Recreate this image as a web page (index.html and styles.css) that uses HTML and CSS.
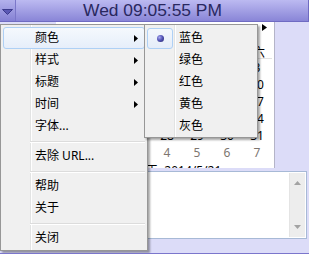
FILE: index.html
```html
<!DOCTYPE html>
<html>
<head>
<meta charset="utf-8">
<link rel="stylesheet" href="styles.css">
</head>
<body>
<div class="window">
  <div class="titlebar">
    <div class="drop">
      <svg width="11" height="6" viewBox="0 0 11 6"><path d="M0.5 0.5 L10.5 0.5 L5.5 5.5 Z" fill="#5b58b4" stroke="#3c3a8c" stroke-width="1"/></svg>
    </div>
    <div class="clock">Wed 09:05:55 PM</div>
  </div>
  <div class="content">
    <div class="calendar">
      <div class="cal-head">
        <span class="nav">
          <svg width="5" height="7" viewBox="0 0 5 7"><path d="M5 0 L0 3.5 L5 7 Z" fill="#000"/></svg>
        </span>
        <span class="month">2014年5月</span>
        <span class="nav">
          <svg width="5" height="7" viewBox="0 0 5 7"><path d="M0 0 L5 3.5 L0 7 Z" fill="#000"/></svg>
        </span>
      </div>
      <div class="weekdays">
        <span>日</span><span>一</span><span>二</span><span>三</span><span>四</span><span>五</span><span>六</span>
      </div>
      <div class="days">
        <span class="other">27</span><span class="other">28</span><span class="other">29</span><span class="other">30</span><span>1</span><span>2</span><span>3</span>
        <span>4</span><span>5</span><span>6</span><span>7</span><span>8</span><span>9</span><span>10</span>
        <span>11</span><span>12</span><span>13</span><span>14</span><span>15</span><span>16</span><span>17</span>
        <span>18</span><span>19</span><span>20</span><span class="today">21</span><span>22</span><span>23</span><span>24</span>
        <span>25</span><span>26</span><span>27</span><span>28</span><span>29</span><span>30</span><span>31</span>
        <span class="other">1</span><span class="other">2</span><span class="other">3</span><span class="other">4</span><span class="other">5</span><span class="other">6</span><span class="other">7</span>
      </div>
      <div class="today-line">今天: 2014/5/21</div>
    </div>
    <div class="notes">
      <div class="notes-text"></div>
      <div class="scrollbar">
        <svg width="7" height="4" viewBox="0 0 7 4"><path d="M0 4 L3.5 0 L7 4 Z" fill="#a3a3a3"/></svg>
        <svg width="7" height="4" viewBox="0 0 7 4"><path d="M0 0 L3.5 4 L7 0 Z" fill="#a3a3a3"/></svg>
      </div>
    </div>
  </div>

  <div class="menu main-menu">
    <div class="item hot">颜色<svg class="arrow" width="4" height="7" viewBox="0 0 4 7"><path d="M0 0 L4 3.5 L0 7 Z" fill="#000"/></svg></div>
    <div class="item">样式<svg class="arrow" width="4" height="7" viewBox="0 0 4 7"><path d="M0 0 L4 3.5 L0 7 Z" fill="#000"/></svg></div>
    <div class="item">标题<svg class="arrow" width="4" height="7" viewBox="0 0 4 7"><path d="M0 0 L4 3.5 L0 7 Z" fill="#000"/></svg></div>
    <div class="item">时间<svg class="arrow" width="4" height="7" viewBox="0 0 4 7"><path d="M0 0 L4 3.5 L0 7 Z" fill="#000"/></svg></div>
    <div class="item">字体...</div>
    <div class="sep"></div>
    <div class="item">去除 URL...</div>
    <div class="sep"></div>
    <div class="item">帮助</div>
    <div class="item">关于</div>
    <div class="sep"></div>
    <div class="item">关闭</div>
  </div>

  <div class="menu sub-menu">
    <div class="sitem"><span class="check on"><span class="dot"></span></span>蓝色</div>
    <div class="sitem"><span class="check"></span>绿色</div>
    <div class="sitem"><span class="check"></span>红色</div>
    <div class="sitem"><span class="check"></span>黄色</div>
    <div class="sitem"><span class="check"></span>灰色</div>
  </div>
</div>
</body>
</html>
```
FILE: styles.css
```css
html, body {
  margin: 0;
  padding: 0;
}

body {
  font-family: "Noto Sans", "Noto Sans CJK SC", sans-serif;
  font-size: 12px;
  color: #000;
}

.window {
  position: relative;
  width: 309px;
  height: 254px;
  box-sizing: border-box;
  background: #dcdcf8;
  border-bottom: 1px solid #7b76cc;
  overflow: hidden;
  display: flex;
  flex-direction: column;
}

.titlebar {
  height: 22px;
  flex: none;
  display: flex;
  box-sizing: border-box;
  background: linear-gradient(#bcbaf1, #8985d7);
  border-bottom: 1px solid #6f6bc2;
  border-right: 1px solid #6f6bc2;
}

.drop {
  width: 16px;
  flex: none;
  display: flex;
  align-items: center;
  justify-content: center;
  padding-top: 2px;
  box-sizing: border-box;
  border-right: 1px solid #7b77c9;
  background: linear-gradient(#b3b1ec, #8581d4);
}

.clock {
  flex: 1;
  text-align: center;
  padding-right: 19px;
  font-family: "Liberation Sans", Arial, sans-serif;
  font-size: 17.4px;
  line-height: 21px;
  color: #29285f;
}

.content {
  flex: 1;
  display: flex;
  flex-direction: column;
}

.calendar {
  margin-left: 56px;
  width: 219px;
  height: 146px;
  box-sizing: border-box;
  background: #fff;
  border-right: 1px solid #b4b4c8;
  overflow: hidden;
  flex: none;
}

.cal-head {
  height: 24px;
  display: flex;
  justify-content: space-between;
  align-items: flex-start;
  padding: 2px 7px 0 7px;
  box-sizing: border-box;
}

.nav {
  display: flex;
  height: 7px;
}

.month {
  font-size: 12px;
  line-height: 16px;
}

.weekdays {
  height: 13px;
  box-sizing: border-box;
  display: grid;
  grid-template-columns: repeat(7, 30px);
  padding-left: 6px;
  border-bottom: 1px solid #e2e2e2;
  margin: 0 2px;
  line-height: 14px;
  text-align: center;
}

.days {
  display: grid;
  grid-template-columns: repeat(7, 30px);
  grid-auto-rows: 17px;
  padding-left: 6px;
  line-height: 17px;
  text-align: center;
}

.days .other {
  color: #7d7670;
}

.today-line {
  margin-top: 2px;
  line-height: 16px;
  padding-left: 78px;
  white-space: nowrap;
}

.notes {
  margin: 3px 2px 0 4px;
  height: 68px;
  box-sizing: border-box;
  border: 1px solid #a7b9d6;
  background: #fff;
  display: flex;
  padding: 1px 1px 1px 0;
  flex: none;
}

.notes-text {
  flex: 1;
}

.scrollbar {
  width: 16px;
  background: #ededed;
  border-left: 1px solid #e4e4e4;
  display: flex;
  flex-direction: column;
  justify-content: space-between;
  align-items: center;
  padding: 8px 0 8px;
  box-sizing: border-box;
}

.menu {
  position: absolute;
  top: 24px;
  box-sizing: border-box;
  background-color: #f0f0f0;
  border: 1px solid #979797;
  padding: 2px 2px 1px;
  box-shadow: 2px 2px 2px rgba(0, 0, 0, 0.35);
}

.main-menu {
  left: 0;
  width: 148px;
  background-image: linear-gradient(to right, transparent 29px, #e2e3e3 29px, #e2e3e3 30px, #fff 30px, #fff 31px, transparent 31px);
}

.item {
  height: 22px;
  box-sizing: border-box;
  display: flex;
  align-items: center;
  padding-left: 31px;
  border: 1px solid transparent;
  border-radius: 3px;
  line-height: 16px;
}

.item.hot {
  border-color: #aed0f5;
  background: linear-gradient(#f5f9fd, #e6eefa);
}

.arrow {
  margin-left: auto;
  margin-right: 6px;
}

.sep {
  height: 0;
  margin: 4px 0 2px 27px;
  border-top: 1px solid #dcdcdc;
  border-bottom: 1px solid #fff;
}

.sub-menu {
  left: 144px;
  width: 114px;
  padding-bottom: 0;
  background-image: linear-gradient(to right, transparent 29px, #e2e3e3 29px, #e2e3e3 30px, #fff 30px, #fff 31px, transparent 31px);
}

.sitem {
  height: 22px;
  display: flex;
  align-items: center;
  line-height: 16px;
}

.check {
  width: 26px;
  height: 21px;
  box-sizing: border-box;
  margin-right: 6px;
  border: 1px solid transparent;
  border-radius: 3px;
  display: flex;
  align-items: center;
  justify-content: center;
}

.check.on {
  border-color: #aed0f5;
  background: linear-gradient(#f3f7fc, #e5edf9);
}

.dot {
  width: 7px;
  height: 7px;
  border-radius: 50%;
  background: radial-gradient(circle at 35% 35%, #a9aaf0 0, #5556b8 45%, #1f1f66 100%);
}
```
